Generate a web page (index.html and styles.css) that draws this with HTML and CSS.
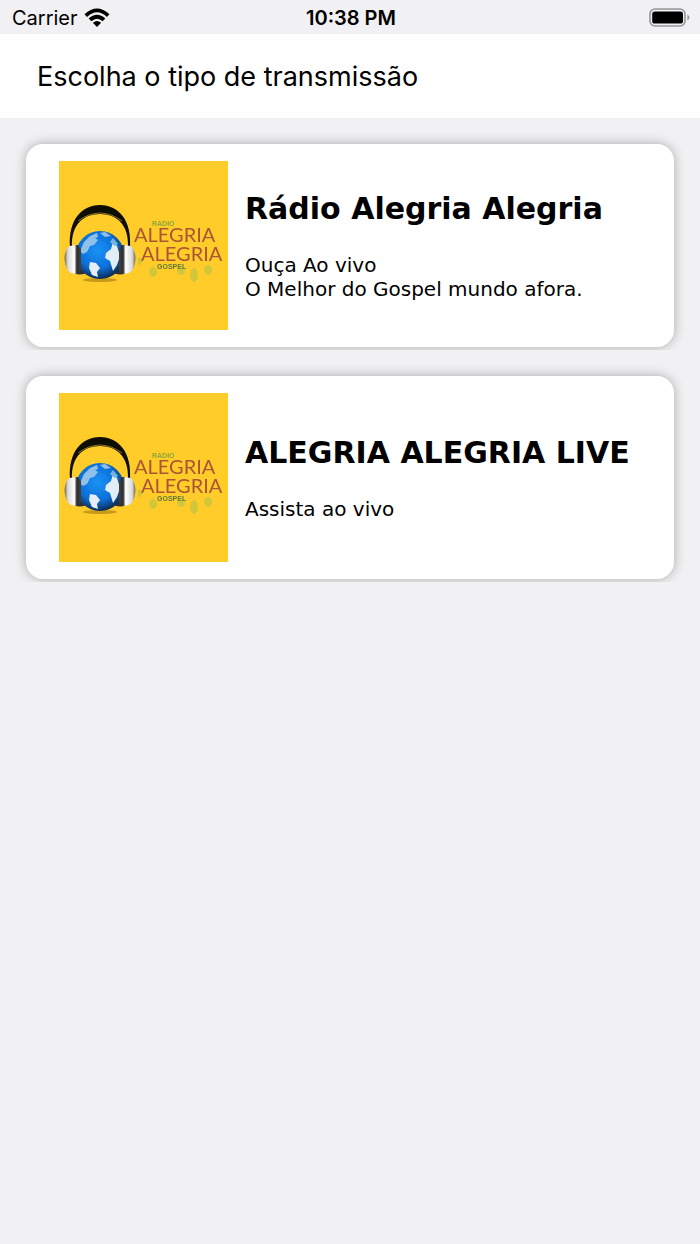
FILE: index.html
```html
<!DOCTYPE html>
<html lang="pt-BR">
<head>
    <meta charset="UTF-8">
    <meta name="viewport" content="width=device-width, initial-scale=1.0">
    <title>Rádio Alegria Alegria</title>
    <link rel="stylesheet" href="styles.css">
</head>
<body>
    <div class="status-bar">
        <div class="carrier">
            <span>Carrier</span>
            <svg width="26" height="20" viewBox="0 0 26 20" aria-hidden="true">
                <path d="M0.5 6.2Q13-5.2 25.5 6.2L22.9 8.9Q13-0.2 3.1 8.9z"/>
                <path d="M4.7 10.5Q13 3 21.3 10.5L18.6 13.2Q13 8.1 7.4 13.2z"/>
                <path d="M8.9 14.8Q13 11.2 17.1 14.8L13 19z"/>
            </svg>
        </div>
        <div class="time">10:38 PM</div>
        <div class="battery">
            <svg width="41" height="20" viewBox="0 0 41 20" aria-hidden="true">
                <rect x="1" y="1" width="35" height="17" rx="5" fill="none" stroke="#96969a" stroke-width="1.6"/>
                <rect x="3.2" y="3.4" width="30.8" height="12.2" rx="2.6"/>
                <path d="M38.4 6.4q4 3 0 6.4z" fill="#96969a"/>
            </svg>
        </div>
    </div>

    <header class="header">
        <h1>Escolha o tipo de transmissão</h1>
    </header>

    <main class="list">
        <div class="item">
            <a class="card" href="#radio">
                <svg class="logo" viewBox="0 0 169 169" role="img" aria-label="Alegria Alegria">
                    <defs>
                        <radialGradient id="globe" cx="0.45" cy="0.4" r="0.6">
                            <stop offset="0" stop-color="#1b93f5"/>
                            <stop offset="0.65" stop-color="#0b6fd8"/>
                            <stop offset="1" stop-color="#0c2c55"/>
                        </radialGradient>
                        <linearGradient id="cupLeft">
                            <stop offset="0" stop-color="#6f6646"/>
                            <stop offset="0.2" stop-color="#d9d9d9"/>
                            <stop offset="0.6" stop-color="#fff"/>
                            <stop offset="0.75" stop-color="#2a2a2a"/>
                            <stop offset="1" stop-color="#444"/>
                        </linearGradient>
                        <linearGradient id="cupRight">
                            <stop offset="0" stop-color="#444"/>
                            <stop offset="0.25" stop-color="#2a2a2a"/>
                            <stop offset="0.4" stop-color="#fff"/>
                            <stop offset="0.8" stop-color="#d9d9d9"/>
                            <stop offset="1" stop-color="#6f6646"/>
                        </linearGradient>
                        <filter id="soft" x="-10%" y="-10%" width="120%" height="120%">
                            <feGaussianBlur stdDeviation="0.7"/>
                        </filter>
                    </defs>
                    <g id="logo">
                        <rect width="169" height="169" fill="#ffcc2a"/>
                        <g filter="url(#soft)">
                            <ellipse cx="41" cy="119" rx="17" ry="2" fill="#c79a1f"/>
                            <path d="M11 86C9 60 22 44 41 44s32 16 30 42h-2C70 64 58 53 41 53S12 64 13 86z" fill="#0c0a05"/>
                            <path d="M19 60q22-16 44 0" fill="none" stroke="#8d762c" stroke-width="1"/>
                            <path d="M15 86q10-5 15 3v21q-7 6-15 2z" fill="#303236"/>
                            <path d="M67 86q-10-5-15 3v21q7 6 15 2z" fill="#303236"/>
                            <circle cx="41" cy="94" r="24" fill="url(#globe)"/>
                            <path d="M25 81l6-6 7-3 1 4-3 1 3 2-4 5-4 1-3 6-4 2-3-3z" fill="#8dc1ec"/>
                            <path d="M41 72l5-1 6 4-6 1z" fill="#8dc1ec"/>
                            <path d="M31 101l6 1 4 5-3 4 1 5-6-2-3-7z" fill="#e4eef4"/>
                            <path d="M47 92l5-4 2-7 4 4 3 10-3 9-4 6-3-10-5-3z" fill="#e1edf4"/>
                            <path d="M54 77l5 6-3 2-5-4z" fill="#79b4df"/>
                            <path d="M8 87q2-3 11-3l3 4v20l-3 5q-9 0-11-5-5-11 0-21z" fill="url(#cupLeft)"/>
                            <path d="M74 87q-2-3-11-3l-3 4v20l3 5q9 0 11-5 5-11 0-21z" fill="url(#cupRight)"/>
                            <g fill="#d3c63a">
                                <ellipse cx="94" cy="111" rx="4" ry="5"/>
                                <ellipse cx="122" cy="110" rx="4" ry="4"/>
                                <ellipse cx="135" cy="114" rx="4" ry="7"/>
                                <ellipse cx="149" cy="109" rx="4" ry="5"/>
                                <ellipse cx="81" cy="100" rx="2" ry="4"/>
                            </g>
                            <text class="logo-name" x="75" y="81">ALEGRIA</text>
                            <text class="logo-name" x="82" y="100">ALEGRIA</text>
                            <text class="logo-small logo-top" x="93" y="65">RADIO</text>
                            <text class="logo-small" x="98" y="108">GOSPEL</text>
                        </g>
                    </g>
                </svg>
                <div class="info">
                    <h2>Rádio Alegria Alegria</h2>
                    <p>Ouça Ao vivo<br>O Melhor do Gospel mundo afora.</p>
                </div>
            </a>
        </div>
        <div class="item">
            <a class="card" href="#live">
                <svg class="logo" viewBox="0 0 169 169" role="img" aria-label="Alegria Alegria"><use href="#logo"/></svg>
                <div class="info">
                    <h2>ALEGRIA ALEGRIA LIVE</h2>
                    <p>Assista ao vivo</p>
                </div>
            </a>
        </div>
    </main>
</body>
</html>
```

FILE: styles.css
```css
body {
    margin: 0;
    background-color: #f1f1f3;
    color: #000;
    font-family: Inter, "Liberation Sans", sans-serif;
}
.status-bar {
    display: grid;
    grid-template-columns: 1fr auto 1fr;
    align-items: center;
    height: 32px;
    padding: 2px 10px 0 12px;
    font-size: 20px;
}
.carrier {
    display: flex;
    align-items: center;
    gap: 6px;
}
.time {
    font-weight: 600;
}
.battery {
    display: flex;
    justify-content: flex-end;
}
.header {
    padding: 25px 37px 23px;
    background-color: #fff;
}
.header h1 {
    margin: 0;
    font-size: 27px;
    line-height: 36px;
    font-weight: 400;
}
.item {
    overflow: hidden;
    padding: 26px 26px 3px;
}
.card {
    display: flex;
    align-items: center;
    gap: 17px;
    padding: 17px 17px 17px 33px;
    border-radius: 17px;
    background-color: #fff;
    box-shadow: 0 0 12px rgba(0, 0, 0, 0.3);
    color: #000;
    text-decoration: none;
}
.logo {
    flex: none;
    width: 169px;
    height: 169px;
}
.info {
    font-family: "DejaVu Sans", Verdana, sans-serif;
}
.info h2 {
    margin: 0 0 26px;
    font-size: 30px;
    line-height: 36px;
    white-space: nowrap;
}
.info p {
    margin: 0;
    font-size: 20px;
    line-height: 24px;
}
.logo-name {
    font-family: Lato, "Liberation Sans", sans-serif;
    font-size: 20px;
    fill: #ab5436;
}
.logo-small {
    font-family: "Liberation Sans", sans-serif;
    font-size: 7px;
    font-weight: bold;
    fill: #5f7a35;
}
.logo-top {
    fill: #8fa53a;
}
```
